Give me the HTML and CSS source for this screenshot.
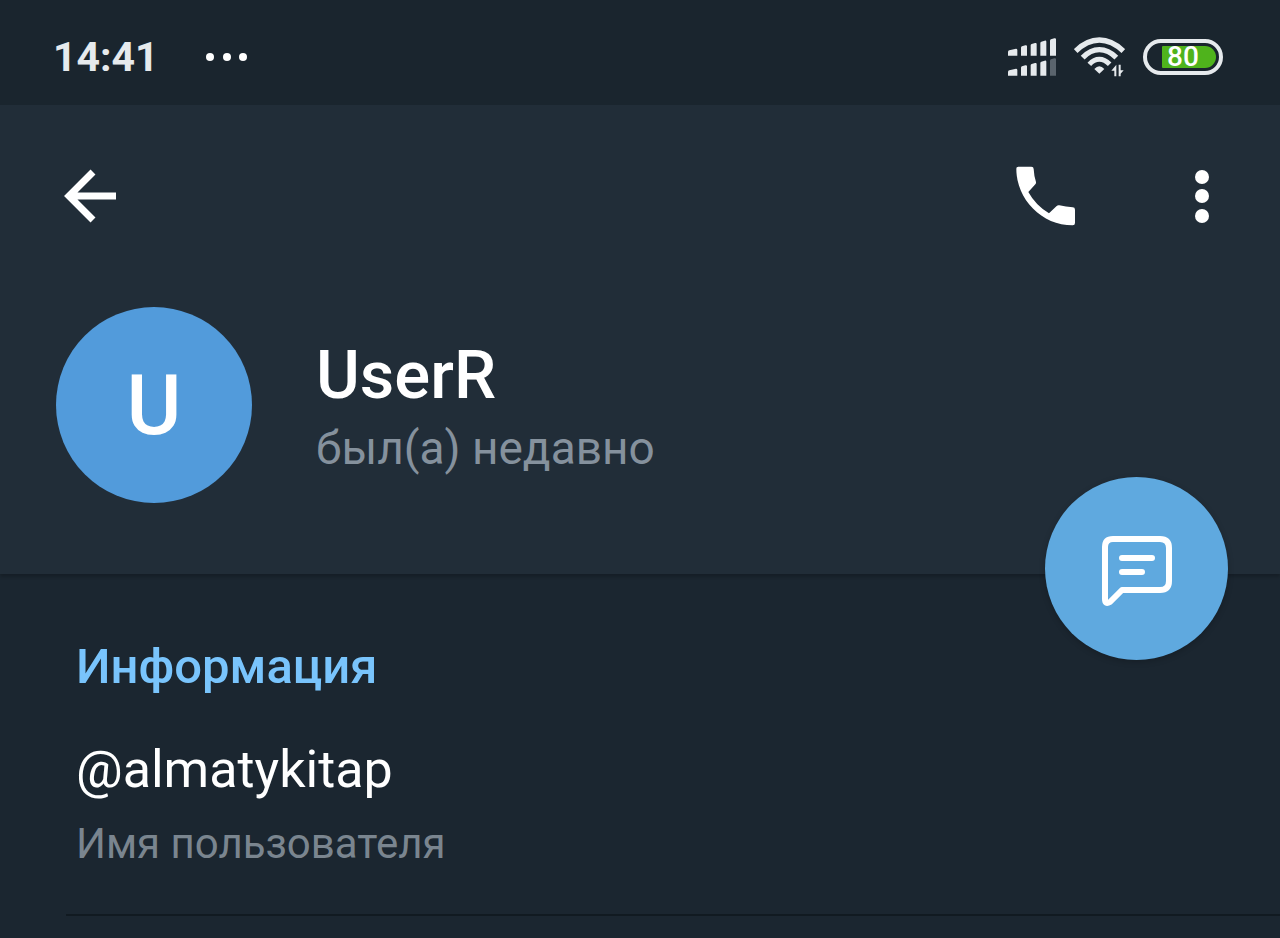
FILE: index.html
```html
<!DOCTYPE html>
<html lang="ru">
  <head>
    <meta charset="utf-8">
    <meta name="viewport" content="width=device-width, initial-scale=1">
    <title>UserR</title>
    <link rel="stylesheet" href="styles.css">
  </head>
  <body>
    <div class="status-bar">
      <span class="clock">14:41</span>
      <svg class="more-dots" width="42" height="8" viewBox="0 0 42 8" fill="#fff">
        <circle cx="4" cy="4" r="4" />
        <circle cx="21" cy="4" r="4" />
        <circle cx="37" cy="4" r="4" />
      </svg>

      <div class="status-icons">
        <svg width="48" height="38" viewBox="0 0 144 114" fill="#e6eaed">
          <path d="M0 42q0-4 4-5l20-5q4 0 4 4v17H0zM39 29q0-3 3-4l10-3q5-1 5 3v28H39zM68 22q0-3 3-4l10-3q5-1 5 3v35H68zM97 15q0-3 3-4l10-3q5-1 5 3v42H97zM126 8q0-3 3-4l10-3q5-1 5 3v49H126z" />
          <path d="M0 102q0-4 4-5l20-5q4 0 4 4v17H0zM39 89q0-3 3-4l10-3q5-1 5 3v28H39zM68 82q0-3 3-4l10-3q5-1 5 3v35H68zM97 75q0-3 3-4l10-3q5-1 5 3v42H97z" />
          <path d="M126 68q0-3 3-4l10-3q5-1 5 3v49H126z" fill="#5a646d" />
        </svg>
        <svg width="51" height="40" viewBox="0 0 153 120" fill="none" stroke="#e6eaed">
          <path d="M5 42Q39 9 76 9t72 33" stroke-width="16" />
          <path d="M26 62Q49 38 76 38t51 24" stroke-width="16" />
          <path d="M46 82Q60 67 76 67t31 15" stroke-width="15" />
          <path d="M76 110L61 96q15-16 30 0z" fill="#e6eaed" stroke="none" />
          <path d="M127 83v35h-6v-17h-9zM134 118V83h6v17h9l-9 10v8z" fill="#e6eaed" stroke="none" />
        </svg>
        <div class="battery">
          <div class="battery-level">80</div>
        </div>
      </div>
    </div>

    <header class="profile-header">
      <div class="toolbar">
        <button class="icon-btn" aria-label="Назад">
          <svg width="54" height="54" viewBox="0 0 54 54" fill="none" stroke="#fff" stroke-width="7">
            <path d="M30 3L6 27l24 24M6 27h47" />
          </svg>
        </button>
        <div class="toolbar-actions">
          <button class="icon-btn" aria-label="Позвонить">
            <svg width="60" height="60" viewBox="0 0 180 180" fill="#fff">
              <path d="M7 2H46Q53 2 53 9Q54 30 60 48Q61 52 58 55L37 78Q59 118 99 142L122 120Q125 117 130 118Q150 123 170 124Q177 124 177 131V171Q177 178 170 178C78 178 1 100 1 8Q1 2 7 2z" />
            </svg>
          </button>
          <button class="icon-btn" aria-label="Ещё">
            <svg width="14" height="54" viewBox="0 0 14 54" fill="#fff">
              <circle cx="7" cy="8" r="7" />
              <circle cx="7" cy="27" r="7" />
              <circle cx="7" cy="47" r="7" />
            </svg>
          </button>
        </div>
      </div>

      <div class="profile">
        <div class="avatar">U</div>
        <div class="profile-text">
          <h1 class="profile-name">UserR</h1>
          <div class="profile-status">был(а) недавно</div>
        </div>
      </div>

      <button class="message-btn" aria-label="Написать сообщение">
        <svg width="72" height="72" viewBox="0 0 72 72" fill="none" stroke="#fff" stroke-width="6" stroke-linecap="round" stroke-linejoin="round">
          <path d="M12 4H59Q68 4 68 13V46Q68 55 59 55H21L9 67Q4 70 4 64V12Q4 4 12 4zM21 23H51M21 37H41" />
        </svg>
      </button>
    </header>

    <main class="info">
      <h2 class="info-title">Информация</h2>
      <div class="info-row">
        <div class="info-value">@almatykitap</div>
        <div class="info-label">Имя пользователя</div>
      </div>
    </main>
  </body>
</html>
```
FILE: styles.css
```css
* {
  box-sizing: border-box;
}

body {
  margin: 0;
  min-height: 100vh;
  background: #1b2630;
  color: #ffffff;
  font-family: Roboto, "Noto Sans", sans-serif;
}

button {
  border: none;
  cursor: pointer;
}

/* Status bar */
.status-bar {
  display: flex;
  align-items: center;
  height: 105px;
  padding: 8px 57px 0 53px;
  background: #1a252e;
}

.clock {
  color: #e6eaed;
  font-size: 41px;
  font-weight: 700;
  line-height: 48px;
}

.more-dots {
  margin-left: 47px;
}

.status-icons {
  display: flex;
  align-items: center;
  gap: 18px;
  margin-left: auto;
}

.battery {
  width: 80px;
  height: 36px;
  padding: 3px;
  border: 4px solid #e6eaed;
  border-radius: 18px;
}

.battery-level {
  width: 54px;
  height: 22px;
  margin-left: auto;
  padding-right: 12px;
  border-radius: 1px 11px 11px 1px;
  background: #4fb31c;
  font-size: 28px;
  font-weight: 500;
  line-height: 22px;
  text-align: center;
}

/* Header */
.profile-header {
  position: relative;
  padding-bottom: 71px;
  background: #212d38;
  box-shadow: 0 3px 3px rgba(0, 0, 0, 0.2);
}

.toolbar {
  display: flex;
  align-items: center;
  justify-content: space-between;
  height: 182px;
  padding: 0 71px 0 63px;
}

.toolbar-actions {
  display: flex;
  align-items: center;
  gap: 119px;
}

.icon-btn {
  display: flex;
  padding: 0;
  background: none;
}

.profile {
  display: flex;
  align-items: center;
  gap: 64px;
  padding: 20px 56px 0;
}

.avatar {
  display: flex;
  align-items: center;
  justify-content: center;
  flex-shrink: 0;
  width: 196px;
  height: 196px;
  border-radius: 50%;
  background: #529bdb;
  font-size: 84px;
  font-weight: 500;
}

.profile-text {
  padding-top: 4px;
}

.profile-name {
  margin: 0;
  font-size: 67px;
  font-weight: 500;
  line-height: 78px;
}

.profile-status {
  margin-top: 4px;
  color: #85919d;
  font-size: 46px;
  line-height: 60px;
}

/* Floating button over the header edge */
.message-btn {
  position: absolute;
  right: 52px;
  bottom: -86px;
  display: flex;
  align-items: center;
  justify-content: center;
  width: 183px;
  height: 183px;
  padding: 4px 0 0;
  border-radius: 50%;
  background: #5fa9df;
  box-shadow: 0 2px 6px rgba(0, 0, 0, 0.2);
}

/* Info */
.info {
  padding: 63px 0 0 66px;
}

.info-title {
  margin: 0 0 41px;
  padding-left: 10px;
  color: #79c4fc;
  font-size: 49px;
  font-weight: 500;
  line-height: 60px;
}

.info-row {
  padding: 0 10px 42px;
  border-bottom: 2px solid #111a21;
}

.info-value {
  font-size: 52px;
  line-height: 64px;
}

.info-label {
  margin-top: 14px;
  color: #7a858f;
  font-size: 42px;
  line-height: 56px;
}
```
